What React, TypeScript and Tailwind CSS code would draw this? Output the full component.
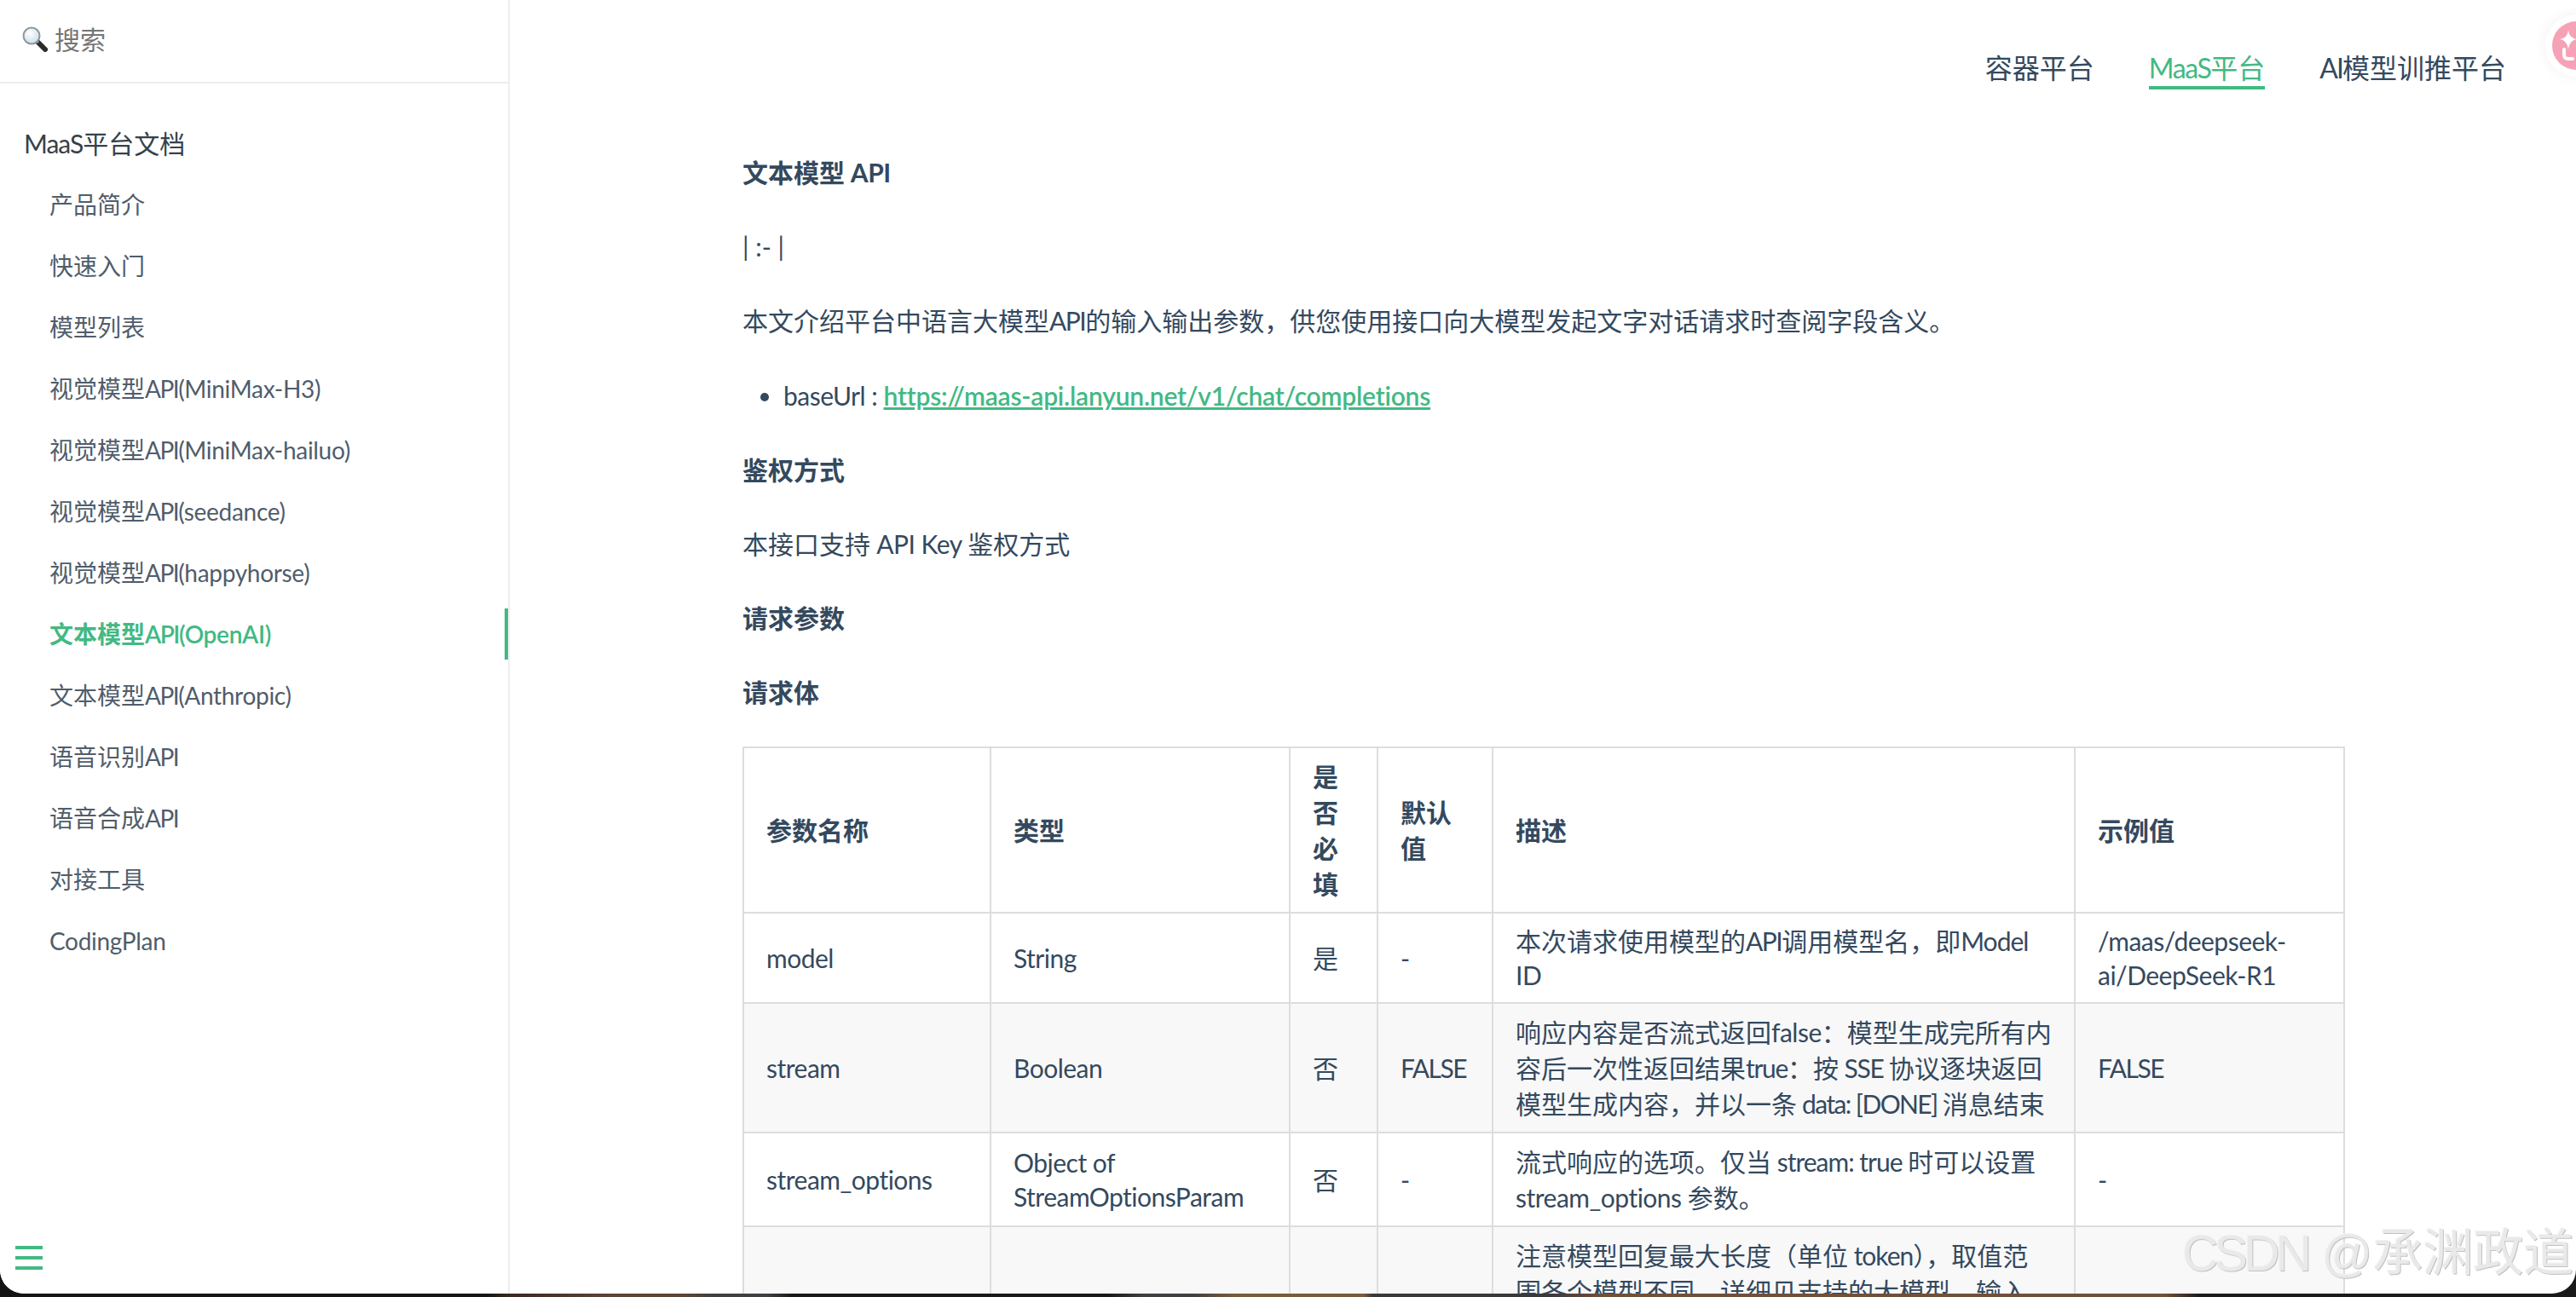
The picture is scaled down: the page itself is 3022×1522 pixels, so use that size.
import React from "react";

const items = [
  "产品简介",
  "快速入门",
  "模型列表",
  "视觉模型API(MiniMax-H3)",
  "视觉模型API(MiniMax-hailuo)",
  "视觉模型API(seedance)",
  "视觉模型API(happyhorse)",
  "文本模型API(OpenAI)",
  "文本模型API(Anthropic)",
  "语音识别API",
  "语音合成API",
  "对接工具",
  "CodingPlan",
];

// Lato stands in for the reference's narrower Latin face, so Latin runs are tightened.
function T({ s, latin = "tracking-[-0.5px]" }: { s: string; latin?: string }) {
  const parts = s.split(/(API|MiniMax|FALSE|[\x20-\x7e]+)/).filter(Boolean);
  return (
    <>
      {parts.map((part, i) => {
        if (part === "API") return <span key={i} className="tracking-[-1.5px]">{part}</span>;
        if (part === "MiniMax") return <span key={i} className="tracking-[-2.5px]">{part}</span>;
        if (part === "FALSE") return <span key={i} className="tracking-[-1.5px]">{part}</span>;
        if (/^[\x20-\x7e]+$/.test(part)) return <span key={i} className={latin}>{part}</span>;
        return <span key={i}>{part}</span>;
      })}
    </>
  );
}

function Glass() {
  return (
    <svg width="30" height="30" viewBox="0 0 30 30" className="shrink-0">
      <defs>
        <radialGradient id="g" cx="0.4" cy="0.35" r="0.8">
          <stop offset="0" stopColor="#ffffff" />
          <stop offset="1" stopColor="#c4d6e2" />
        </radialGradient>
      </defs>
      <line x1="18" y1="18" x2="27" y2="27" stroke="#2b2b2b" strokeWidth="6" strokeLinecap="round" />
      <line x1="15" y1="15" x2="19" y2="19" stroke="#9a9a9a" strokeWidth="3" />
      <circle cx="11" cy="11" r="9.5" fill="url(#g)" stroke="#8b979f" strokeWidth="2" />
    </svg>
  );
}

function Sidebar() {
  return (
    <aside className="relative flex h-full w-[598px] shrink-0 flex-col border-r-2 border-[#eeeeee] bg-white">
      <div className="flex h-[98px] items-center gap-[8px] border-b-2 border-[#eeeeee] pb-[4px] pl-[26px]">
        <Glass />
        <span className="text-[30px] leading-[40px] text-[#757575]">搜索</span>
      </div>
      <div className="pt-[34px]">
        <div className="flex h-[72px] items-center pl-[28px] text-[30px] text-[#364149]">
          <span><T s="MaaS平台文档" latin="tracking-[-1px]" /></span>
        </div>
        {items.map((t) => {
          const active = t === "文本模型API(OpenAI)";
          return (
            <div key={t} className="relative flex h-[72px] items-center pl-[58px]">
              <span className={active ? "text-[28px] font-semibold text-[#42b983]" : "text-[28px] text-[#505d6b]"}>
                <T s={t} latin="tracking-[-0.3px]" />
              </span>
              {active && <span className="absolute right-0 top-[6px] h-[60px] w-[4px] bg-[#42b983]" />}
            </div>
          );
        })}
      </div>
      <div className="absolute bottom-[28px] left-[18px] flex flex-col gap-[8px]">
        <span className="h-[4px] w-[32px] bg-[#42b983]" />
        <span className="h-[4px] w-[32px] bg-[#42b983]" />
        <span className="h-[4px] w-[32px] bg-[#42b983]" />
      </div>
    </aside>
  );
}

function Nav() {
  return (
    <nav className="flex h-[177px] items-start justify-end gap-[64px] pr-[82px] pt-[58px] text-[32px] leading-[43px] text-[#34495e]">
      <span>容器平台</span>
      <span className="border-b-4 border-[#42b983] text-[#42b983]">
        <T s="MaaS平台" latin="tracking-[-1.4px]" />
      </span>
      <span>
        <T s="AI模型训推平台" latin="tracking-[-2px]" />
      </span>
    </nav>
  );
}

const th = "border-2 border-[#dddddd] px-[26px] py-[12px] text-left font-bold leading-[42px]";
const td = "border-2 border-[#dddddd] px-[26px] py-[12px] font-normal leading-[42px]";
const tdTight = "border-2 border-[#dddddd] px-[26px] py-[12px] font-normal leading-[40px]";
const tdLines = "whitespace-nowrap border-2 border-[#dddddd] px-[26px] py-[12px] font-normal leading-[42px]";

function ParamTable() {
  return (
    <table className="mt-[37px] w-[1878px] table-fixed border-collapse text-[30px] text-[#34495e]">
      <colgroup>
        <col className="w-[290px]" />
        <col className="w-[351px]" />
        <col className="w-[103px]" />
        <col className="w-[135px]" />
        <col className="w-[683px]" />
        <col className="w-[316px]" />
      </colgroup>
      <thead>
        <tr>
          <th className={th}>参数名称</th>
          <th className={th}>类型</th>
          <th className={th}>是否必填</th>
          <th className={th}>默认值</th>
          <th className={th}>描述</th>
          <th className={th}>示例值</th>
        </tr>
      </thead>
      <tbody>
        <tr>
          <td className={tdTight}><T s="model" /></td>
          <td className={tdTight}><T s="String" /></td>
          <td className={tdTight}>是</td>
          <td className={tdTight}>-</td>
          <td className={tdTight}>
            <T s="本次请求使用模型的API调用模型名，即Model" latin="tracking-[-1px]" />
            <br />
            <T s="ID" />
          </td>
          <td className={tdTight}><T s="/maas/deepseek-ai/DeepSeek-R1" /></td>
        </tr>
        <tr className="bg-[#f8f8f8]">
          <td className={td}><T s="stream" /></td>
          <td className={td}><T s="Boolean" /></td>
          <td className={td}>否</td>
          <td className={td}><T s="FALSE" /></td>
          <td className={tdLines}>
            <T s="响应内容是否流式返回false：模型生成完所有内" />
            <br />
            <T s="容后一次性返回结果true：按 SSE 协议逐块返回" latin="tracking-[-1.3px]" />
            <br />
            <T s="模型生成内容，并以一条 data: [DONE] 消息结束" latin="tracking-[-1.6px]" />
          </td>
          <td className={td}><T s="FALSE" /></td>
        </tr>
        <tr>
          <td className={td}><T s="stream_options" /></td>
          <td className={tdTight}><T s="Object of StreamOptionsParam" /></td>
          <td className={td}>否</td>
          <td className={td}>-</td>
          <td className={tdLines}>
            <T s="流式响应的选项。仅当 stream: true 时可以设置" latin="tracking-[-1px]" />
            <br />
            <T s="stream_options 参数。" />
          </td>
          <td className={td}>-</td>
        </tr>
        <tr className="bg-[#f8f8f8]">
          <td className={td}></td>
          <td className={td}></td>
          <td className={td}></td>
          <td className={td}></td>
          <td className={tdLines}>
            <T s="注意模型回复最大长度（单位 token），取值范" latin="tracking-[-1px]" />
            <br />
            <T s="围各个模型不同，详细见支持的大模型，输入" />
          </td>
          <td className={td}></td>
        </tr>
      </tbody>
    </table>
  );
}

function Article() {
  const p = "my-[36px] text-[30px] leading-[51.2px] text-[#34495e]";
  const strong = "my-[36px] text-[30px] font-bold leading-[51.2px] text-[#34495e]";
  return (
    <article className="pl-[273px]">
      <p className={`${strong} mt-0`}><T s="文本模型 API" /></p>
      <p className={p}>| :- |</p>
      <p className={p}><T s="本文介绍平台中语言大模型API的输入输出参数，供您使用接口向大模型发起文字对话请求时查阅字段含义。" /></p>
      <ul className="my-[36px] list-disc pl-[48px] text-[30px] leading-[51.2px] text-[#34495e]">
        <li>
          <T s="baseUrl : " />
          <a className="font-semibold text-[#42b983] underline"><T s="https://maas-api.lanyun.net/v1/chat/completions" latin="tracking-[-0.2px]" /></a>
        </li>
      </ul>
      <p className={strong}>鉴权方式</p>
      <p className={p}><T s="本接口支持 API Key 鉴权方式" /></p>
      <p className={strong}>请求参数</p>
      <p className={`${strong} mb-0`}>请求体</p>
      <ParamTable />
    </article>
  );
}

function Badge() {
  return (
    <div className="absolute left-[2986px] top-[17px] flex h-[73px] w-[73px] items-center justify-center rounded-full bg-white shadow-[0_0_16px_rgba(0,0,0,0.06)]">
      <div className="relative h-[57px] w-[57px] rounded-full bg-[#f6a2b6]">
        <svg width="57" height="57" viewBox="0 0 57 57" className="absolute left-0 top-0">
          <path d="M19 10 C20 17 23 20 29 21 C23 22 20 26 19 33 C18 26 15 22 9 21 C15 20 18 17 19 10 Z" fill="#ffffff" />
          <path d="M14 33 V39 Q14 44 19 44 H24" fill="none" stroke="#ffffff" strokeWidth="4" strokeLinecap="round" />
        </svg>
      </div>
    </div>
  );
}

export default function App() {
  return (
    <div className="relative h-[1522px] w-[3022px] overflow-hidden bg-[linear-gradient(90deg,#141414_0,#141414_570px,#3a2a22_600px,#5c4636_720px,#5c4636_800px,#3f3f44_840px,#3f3f44_900px,#15191c_930px,#15191c_1300px,#3f3f44_1340px,#3f3f44_1400px,#7a5c3c_1450px,#7a5a3c_1600px,#3a3a3c_1610px,#3a3a3c_1820px,#70503a_1880px,#70503a_2540px,#1c1c1c_2580px,#1a1a1a_3022px)] font-['Lato','Noto_Sans_CJK_SC',sans-serif]">
      <div className="flex h-[1518px] overflow-hidden rounded-b-[28px] bg-white">
        <Sidebar />
        <main className="min-w-0 flex-1">
          <Nav />
          <Article />
        </main>
      </div>
      <Badge />
      <div className="absolute left-[2560px] top-[1435px] whitespace-nowrap font-['Liberation_Sans','Noto_Sans_CJK_SC',sans-serif] text-[59px] leading-[72px] text-[#e9e9e9] [text-shadow:1px_1px_0_#c2c2c2,-1px_-1px_0_#f4f4f4]">
        <span className="tracking-[-5px]">CSDN</span> <span>@</span>承渊政道
      </div>
    </div>
  );
}
